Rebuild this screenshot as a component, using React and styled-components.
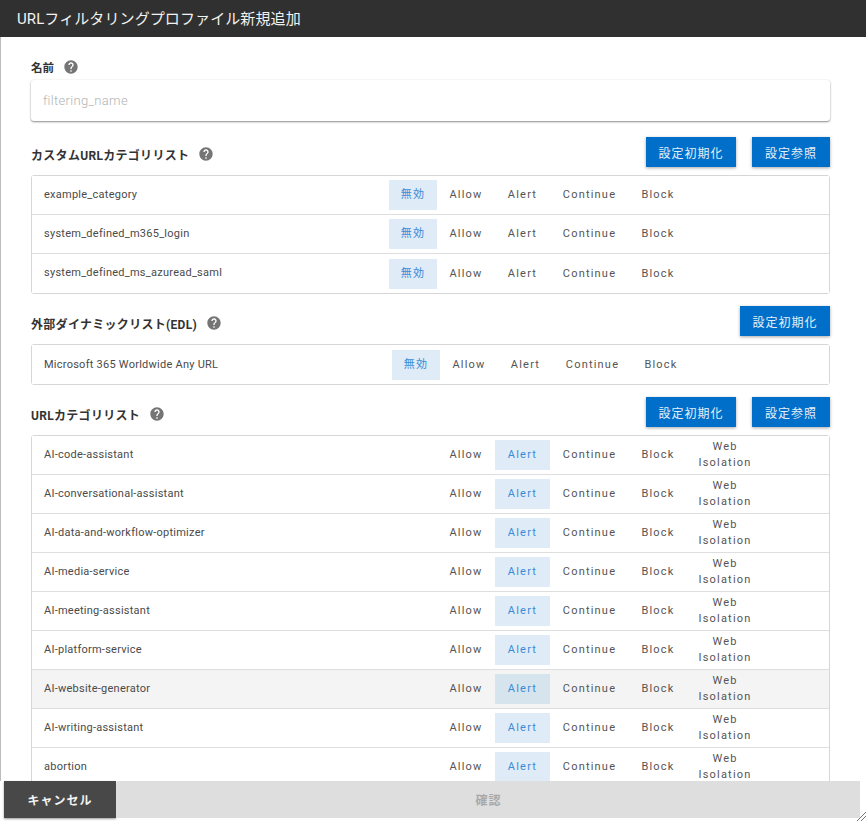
import React from 'react';
import styled, { createGlobalStyle } from 'styled-components';
import { MdHelp } from 'react-icons/md';

const GlobalStyle = createGlobalStyle`
  html, body, #root {
    margin: 0;
    height: 100%;
    overflow: hidden;
  }
  body {
    background: #fff;
    font-family: Roboto, "Noto Sans CJK JP", sans-serif;
    color: #333;
  }
`;

const Dialog = styled.div`
  display: flex;
  flex-direction: column;
  height: 821px;
  position: relative;
  background: #fff;
`;

const Header = styled.h1`
  flex: none;
  height: 37px;
  margin: 0;
  padding-left: 17px;
  background: #303030;
  color: #f2f2f2;
  font-size: 15px;
  font-weight: 400;
  letter-spacing: 0.1px;
  line-height: 38px;
`;

const Scroller = styled.div`
  flex: 1;
  min-height: 0;
  overflow-y: scroll;
  border-left: 1px solid #bdbdbd;
  padding: 0 30px 30px 30px;

  &::-webkit-scrollbar {
    width: 6px;
  }
  &::-webkit-scrollbar-track {
    background: #fbfbfb;
  }
  &::-webkit-scrollbar-thumb {
    background: #bcbcbc;
  }
`;

const NameLabel = styled.div`
  display: flex;
  align-items: center;
  height: 43px;
  padding-top: 17px;
  box-sizing: border-box;
  font-size: 11.5px;
  font-weight: 700;
`;

const HelpIcon = styled(MdHelp)`
  color: #757575;
  margin-left: 9px;
  font-size: 16px;
`;

const NameInput = styled.input`
  display: block;
  box-sizing: border-box;
  width: 799px;
  height: 41px;
  padding: 0 12px;
  border: none;
  border-radius: 3px;
  outline: none;
  background: #fff;
  box-shadow: 0 1px 2px rgba(0, 0, 0, 0.45), 0 0 2px rgba(0, 0, 0, 0.06);
  font-family: inherit;
  font-size: 13px;
  font-weight: 300;
  letter-spacing: 0.3px;

  &::placeholder {
    color: #b4b4b4;
  }
`;

const SectionHead = styled.div`
  display: flex;
  align-items: center;
  justify-content: space-between;
  width: 799px;
  height: 30px;
  margin-top: ${(p) => p.$top}px;
  margin-bottom: 8px;
`;

const SectionTitle = styled.h2`
  display: flex;
  align-items: center;
  margin: 4px 0 0;
  font-size: 12px;
  font-weight: 700;
  letter-spacing: 0.3px;
  color: #333;
`;

const Actions = styled.div`
  display: flex;
  gap: 16px;
`;

const ActionButton = styled.button`
  width: ${(p) => p.$width}px;
  height: 30px;
  padding: 0;
  border: none;
  background: #006fc9;
  color: #e6f0f8;
  box-shadow: 0 1px 3px rgba(0, 0, 0, 0.35);
  font-family: inherit;
  font-size: 12px;
  letter-spacing: 1px;
  white-space: nowrap;
`;

const Table = styled.div`
  box-sizing: border-box;
  width: 799px;
  border: 1px solid #d6d6d6;
  border-radius: 3px;
`;

const Row = styled.div`
  display: flex;
  align-items: center;
  box-sizing: border-box;
  height: 39px;
  background: ${(p) => (p.$hover ? '#f4f4f4' : '#fff')};
  border-bottom: ${(p) => (p.$last ? 'none' : '1px solid #dedede')};
`;

const RowName = styled.div`
  flex: none;
  box-sizing: border-box;
  width: ${(p) => p.$width}px;
  padding-left: 12px;
  padding-bottom: ${(p) => (p.$lift ? 2 : 0)}px;
  font-size: 11px;
  letter-spacing: 0.25px;
  color: #4a4a4a;
  white-space: nowrap;
`;

const Option = styled.div`
  display: flex;
  align-items: center;
  justify-content: center;
  flex: none;
  box-sizing: border-box;
  width: ${(p) => p.$width}px;
  height: 30px;
  text-align: center;
  font-size: 11px;
  line-height: 16px;
  letter-spacing: 1.2px;
  color: ${(p) => (p.$active ? '#3a8bd8' : '#555')};
  background: ${(p) => (p.$active ? (p.$hover ? '#d6e4ee' : '#dfecf7') : 'transparent')};
`;

const Footer = styled.div`
  flex: none;
  display: flex;
  height: 37px;
  margin-bottom: 3px;
  padding: 0 6px 0 4px;
  gap: 1px;
`;

const CancelButton = styled.button`
  width: 112px;
  border: none;
  background: #484848;
  color: #f2f2f2;
  box-shadow: 0 1px 2px rgba(0, 0, 0, 0.4);
  font-family: inherit;
  font-size: 12px;
  font-weight: 700;
  letter-spacing: 1px;
`;

const ConfirmButton = styled.button`
  flex: 1;
  border: none;
  background: #dedede;
  color: #a8a8a8;
  font-family: inherit;
  font-size: 12px;
  font-weight: 700;
  letter-spacing: 1px;
`;

const ResizeHandle = styled.svg`
  position: absolute;
  right: 0;
  bottom: 0;
  width: 9px;
  height: 9px;
`;

const customRows = ['example_category', 'system_defined_m365_login', 'system_defined_ms_azuread_saml'];

const categories = [
  'AI-code-assistant', 'AI-conversational-assistant', 'AI-data-and-workflow-optimizer', 'AI-media-service',
  'AI-meeting-assistant', 'AI-platform-service', 'AI-website-generator', 'AI-writing-assistant',
  'abortion', 'abused-drugs', 'adult', 'alcohol-and-tobacco', 'artificial-intelligence', 'auctions',
  'business-and-economy', 'command-and-control', 'compromised-website', 'computer-and-internet-info',
  'content-delivery-networks', 'copyright-infringement', 'cryptocurrency', 'dating', 'dynamic-dns',
  'educational-institutions', 'encrypted-dns', 'entertainment-and-arts', 'extremism', 'fashion',
  'financial-services', 'gambling', 'games', 'government', 'grayware', 'hacking', 'health-and-medicine',
  'high-risk', 'home-and-garden', 'hunting-and-fishing', 'insufficient-content', 'internet-communications-and-telephony',
  'internet-portals', 'job-search', 'legal', 'low-risk', 'malware', 'medium-risk', 'military',
  'motor-vehicles', 'music', 'newly-registered-domain', 'news', 'not-resolved', 'nudity', 'online-storage-and-backup',
  'parked', 'peer-to-peer', 'personal-sites-and-blogs', 'philosophy-and-political-advocacy', 'phishing',
  'private-ip-addresses', 'proxy-avoidance-and-anonymizers', 'questionable', 'ransomware', 'real-estate',
  'real-time-detection', 'recreation-and-hobbies', 'reference-and-research', 'religion', 'scanning-activity',
  'search-engines', 'sex-education', 'shareware-and-freeware', 'shopping', 'social-networking', 'society',
  'sports', 'stock-advice-and-tools', 'streaming-media', 'swimsuits-and-intimate-apparel', 'training-and-tools',
  'translation', 'travel', 'unknown', 'weapons', 'web-advertisements', 'web-based-email', 'web-hosting',
];

const HelpTitle = ({ children }) => (
  <SectionTitle>
    {children}
    <HelpIcon />
  </SectionTitle>
);

const SimpleRow = ({ name, width, last, lift }) => (
  <Row $last={last}>
    <RowName $width={width} $lift={lift}>{name}</RowName>
    <Option $active $width={48}>無効</Option>
    <Option $width={58}>Allow</Option>
    <Option $width={55}>Alert</Option>
    <Option $width={79}>Continue</Option>
    <Option $width={58}>Block</Option>
  </Row>
);

export default function App() {
  return (
    <>
      <GlobalStyle />
      <Dialog>
        <Header>URLフィルタリングプロファイル新規追加</Header>
        <Scroller>
          <NameLabel>
            名前
            <HelpIcon />
          </NameLabel>
          <NameInput placeholder="filtering_name" />

          <SectionHead $top={16}>
            <HelpTitle>カスタムURLカテゴリリスト</HelpTitle>
            <Actions>
              <ActionButton $width={90}>設定初期化</ActionButton>
              <ActionButton $width={78}>設定参照</ActionButton>
            </Actions>
          </SectionHead>
          <Table>
            {customRows.map((name, i) => (
              <SimpleRow key={name} name={name} width={357} lift last={i === customRows.length - 1} />
            ))}
          </Table>

          <SectionHead $top={12}>
            <HelpTitle>外部ダイナミックリスト(EDL)</HelpTitle>
            <Actions>
              <ActionButton $width={90}>設定初期化</ActionButton>
            </Actions>
          </SectionHead>
          <Table>
            <SimpleRow name="Microsoft 365 Worldwide Any URL" width={360} last />
          </Table>

          <SectionHead $top={12}>
            <HelpTitle>URLカテゴリリスト</HelpTitle>
            <Actions>
              <ActionButton $width={90}>設定初期化</ActionButton>
              <ActionButton $width={78}>設定参照</ActionButton>
            </Actions>
          </SectionHead>
          <Table>
            {categories.map((name, i) => {
              const hover = name === 'AI-website-generator';
              return (
                <Row key={name} $hover={hover} $last={i === categories.length - 1}>
                  <RowName $width={405} $lift>{name}</RowName>
                  <Option $width={58}>Allow</Option>
                  <Option $active $hover={hover} $width={55}>Alert</Option>
                  <Option $width={79}>Continue</Option>
                  <Option $width={58}>Block</Option>
                  <Option $width={76}>Web Isolation</Option>
                </Row>
              );
            })}
          </Table>
        </Scroller>
        <Footer>
          <CancelButton>キャンセル</CancelButton>
          <ConfirmButton disabled>確認</ConfirmButton>
        </Footer>
        <ResizeHandle viewBox="0 0 9 9">
          <path d="M0 9L9 0M4 9L9 4" stroke="#777" strokeWidth="1" fill="none" />
        </ResizeHandle>
      </Dialog>
    </>
  );
}
